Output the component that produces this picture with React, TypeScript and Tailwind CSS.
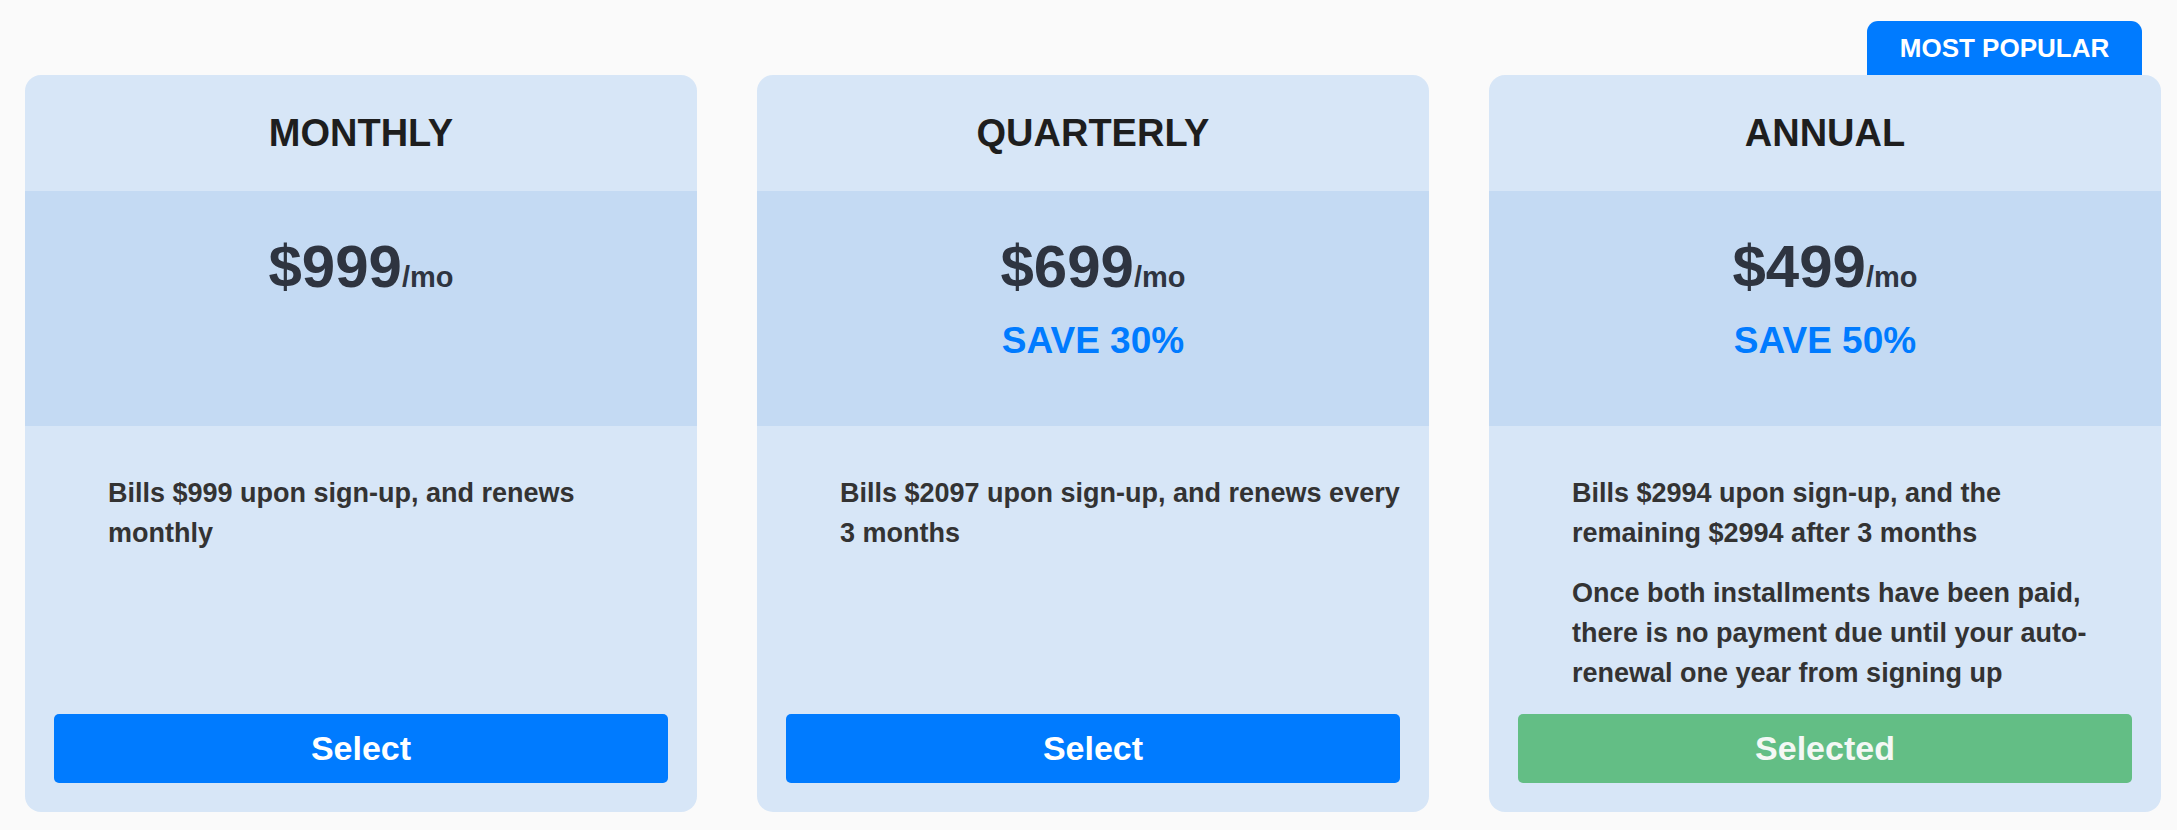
const plans = [
  {
    name: "MONTHLY",
    price: "$999",
    save: "",
    notes: ["Bills $999 upon sign-up, and renews monthly"],
    selected: false,
  },
  {
    name: "QUARTERLY",
    price: "$699",
    save: "SAVE 30%",
    notes: ["Bills $2097 upon sign-up, and renews every 3 months"],
    selected: false,
  },
  {
    name: "ANNUAL",
    price: "$499",
    save: "SAVE 50%",
    notes: [
      "Bills $2994 upon sign-up, and the remaining $2994 after 3 months",
      "Once both installments have been paid, there is no payment due until your auto-renewal one year from signing up",
    ],
    selected: true,
    popular: true,
  },
];

export default function App() {
  return (
    <div
      className="min-h-[830px] w-full bg-[#fafafa]"
      style={{ fontFamily: '"Liberation Sans", Arial, sans-serif' }}
    >
      <div className="flex w-[2160px] gap-[60px] pl-[25px] pt-[75px]">
        {plans.map((plan) => (
          <div
            key={plan.name}
            className="relative flex h-[737px] w-[672px] shrink-0 flex-col rounded-[16px] bg-[#d7e6f7]"
          >
            {plan.popular && (
              <div className="absolute -top-[54px] right-[19px] flex h-[54px] w-[275px] items-center justify-center rounded-t-[11px] bg-[#007bff] text-[26px] font-bold text-white">
                MOST POPULAR
              </div>
            )}

            <div className="flex h-[116px] items-center justify-center text-[38px] font-bold text-[#1e1e1e]">
              {plan.name}
            </div>

            <div className="flex h-[235px] flex-col items-center bg-[#c4daf3] pt-[41px]">
              <div className="flex items-baseline text-[#2e3440]">
                <span className="text-[60px] leading-[70px] font-bold">{plan.price}</span>
                <span className="text-[29px] font-bold">/mo</span>
              </div>
              {plan.save && (
                <div className="mt-[17px] text-[37px] leading-[44px] font-bold text-[#007bff]">
                  {plan.save}
                </div>
              )}
            </div>

            <div className="flex-1 pt-[47px] pl-[83px]">
              <div className="flex w-[562px] flex-col gap-[20px]">
                {plan.notes.map((note) => (
                  <p key={note} className="text-[27px] leading-[40px] font-bold text-[#333333]">
                    {note}
                  </p>
                ))}
              </div>
            </div>

            <div className="px-[29px] pb-[29px]">
              <button
                className={`flex h-[69px] w-full items-center justify-center rounded-[5px] text-[34px] font-bold ${
                  plan.selected ? "bg-[#63be85] text-[#f4f8f5]" : "bg-[#007bff] text-white"
                }`}
              >
                {plan.selected ? "Selected" : "Select"}
              </button>
            </div>
          </div>
        ))}
      </div>
    </div>
  );
}
